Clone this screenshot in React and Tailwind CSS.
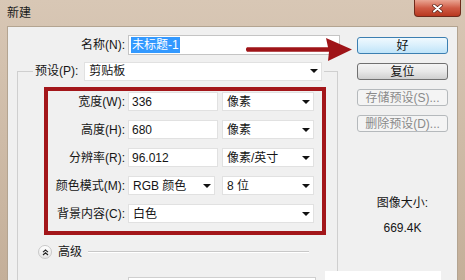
import React from "react";

const font = { fontFamily: '"Liberation Sans", "Noto Sans CJK SC", sans-serif' };

function Arrow() {
  return (
    <span className="ml-[4px] h-0 w-0 border-x-[4px] border-t-[4px] border-b-0 border-x-transparent border-t-[#111]" />
  );
}

function Select({ className, value }) {
  return (
    <div className={`flex h-[19px] items-center justify-between border border-[#e1e1e1] bg-white pl-[4px] pr-[3px] ${className}`}>
      <span>{value}</span>
      <Arrow />
    </div>
  );
}

function Field({ className, value }) {
  return (
    <div className={`flex h-[19px] items-center border border-[#e1e1e1] bg-white pl-[3px] ${className}`}>
      {value}
    </div>
  );
}

function Row({ label, children }) {
  return (
    <div className="flex h-[19px] items-center">
      <span className="w-[77px] text-right">{label}</span>
      <div className="ml-[3px] flex items-center">{children}</div>
    </div>
  );
}

function Button({ children, kind }) {
  const styles = {
    ok: "border-[#3c7fb1] bg-gradient-to-b from-[#f0f9fe] via-[#d9effc] to-[#bfe4f9] text-[#111]",
    normal: "border-[#707070] bg-gradient-to-b from-[#f4f4f4] via-[#e8e8e8] to-[#cfcfcf] text-[#111]",
    disabled: "border-[#b5b9bc] bg-[#f4f4f4] text-[#8a8a8a]",
  };
  return (
    <div className={`flex h-[17px] w-[91px] items-center justify-center rounded-[3px] border ${styles[kind]}`}>
      {children}
    </div>
  );
}

export default function App() {
  return (
    <div
      style={font}
      className="relative flex h-[280px] w-[465px] flex-col overflow-hidden bg-gradient-to-b from-[#d8c7b5] to-[#c4af99] text-[12px] leading-[16px] text-[#151515]"
    >
      {/* title bar */}
      <div className="flex h-[26px] shrink-0 items-start justify-between pl-[7px] pr-[4px]">
        <span className="mt-[5px] text-[#1b1b1b]">新建</span>
        <div className="flex h-[17px] w-[47px] items-center justify-center rounded-b-[4px] border border-t-0 border-[#6f2a1c] bg-gradient-to-b from-[#e9a593] via-[#cf5b45] to-[#b8371f]">
          <svg width="11" height="9" viewBox="0 0 11 9">
            <path d="M2 1.5 L9 7.5 M9 1.5 L2 7.5" stroke="#5a2015" strokeWidth="3.4" strokeLinecap="round" />
            <path d="M2 1.5 L9 7.5 M9 1.5 L2 7.5" stroke="#fff" strokeWidth="2" strokeLinecap="round" />
          </svg>
        </div>
      </div>

      {/* dialog body */}
      <div className="mx-[7px] flex min-h-0 flex-1 overflow-hidden border border-b-0 border-[#b3a491] bg-[#f0f0f0]">
        <div className="w-[333px] shrink-0">
          <div className="mt-[8px] flex h-[20px] items-center">
            <span className="w-[117px] text-right">名称(N):</span>
            <div className="ml-[3px] flex h-[20px] w-[212px] items-center border border-[#c4c4c4] bg-white pl-[2px]">
              <span className="bg-[#3399ff] px-[1px] text-white">未标题-1</span>
            </div>
          </div>

          <fieldset className="ml-[9px] mt-[7px] h-[240px] w-[321px] border border-[#cfcfcf] p-0">
            <legend className="ml-[15px] px-[2px]">
              <div className="flex h-[18px] items-center">
                <span>预设(P):</span>
                <Select className="ml-[6px] h-[18px] w-[238px]" value="剪贴板" />
              </div>
            </legend>

            <div className="ml-[26px] mt-[7px] flex w-[282px] flex-col gap-[9px] border-4 border-[#a3161a] pb-[8px] pt-[1px]">
              <Row label="宽度(W):">
                <Field className="w-[90px]" value="336" />
                <Select className="ml-[4px] w-[92px]" value="像素" />
              </Row>
              <Row label="高度(H):">
                <Field className="w-[90px]" value="680" />
                <Select className="ml-[4px] w-[92px]" value="像素" />
              </Row>
              <Row label="分辨率(R):">
                <Field className="w-[90px]" value="96.012" />
                <Select className="ml-[4px] w-[92px]" value="像素/英寸" />
              </Row>
              <Row label="颜色模式(M):">
                <Select className="w-[87px]" value="RGB 颜色" />
                <Select className="ml-[7px] w-[92px]" value="8 位" />
              </Row>
              <Row label="背景内容(C):">
                <Select className="w-[186px]" value="白色" />
              </Row>
            </div>

            <div className="ml-[20px] mt-[10px] flex h-[14px] items-center">
              <div className="flex h-[14px] w-[14px] items-center justify-center rounded-full border border-[#c9c9c9] bg-gradient-to-b from-white to-[#e4e4e4]">
                <svg width="7" height="7" viewBox="0 0 7 7">
                  <path d="M1 3.2 L3.5 1 L6 3.2 M1 6 L3.5 3.8 L6 6" fill="none" stroke="#222" strokeWidth="1.1" />
                </svg>
              </div>
              <span className="ml-[6px]">高级</span>
              <div className="ml-[6px] h-0 w-[221px] border-t border-b border-t-[#c8c8c8] border-b-white" />
            </div>

            <div className="ml-[110px] mt-[18px] h-[12px] w-[188px] border border-[#cfcfcf] bg-white" />
          </fieldset>
        </div>

        <div className="flex flex-1 flex-col items-start pl-[16px]">
          <div className="mt-[10px] flex flex-col gap-[9px]">
            <Button kind="ok">好</Button>
            <Button kind="normal">复位</Button>
            <Button kind="disabled">存储预设(S)...</Button>
            <Button kind="disabled">删除预设(D)...</Button>
          </div>
          <div className="mt-[63px] w-[91px] text-center">图像大小:</div>
          <div className="mt-[9px] w-[91px] text-center">669.4K</div>
        </div>
      </div>

      {/* white box overlapping the separator at the bottom */}
      <div className="absolute left-[325px] top-[271px] h-[12px] w-[116px] bg-white" />

      {/* red annotation arrow */}
      <svg className="absolute left-[244px] top-[36px]" width="112" height="26" viewBox="0 0 112 26">
        <path
          d="M3 11.3 L84 11.3 L82 2 L108 13.5 L84 25 L85 15.7 L3 15.7 Q0.8 13.5 3 11.3 Z"
          fill="#9f1418"
        />
      </svg>
    </div>
  );
}
